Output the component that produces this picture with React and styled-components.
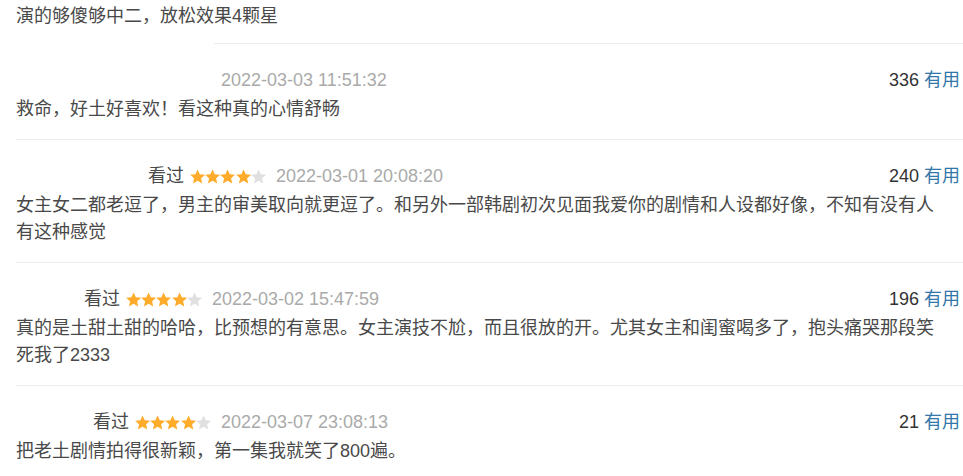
import React from "react";
import styled, { createGlobalStyle } from "styled-components";

const GlobalStyle = createGlobalStyle`
  html, body {
    margin: 0;
    padding: 0;
    background: #fff;
    overflow: hidden;
  }
  body {
    font-family: "Liberation Sans", "Noto Sans CJK SC", sans-serif;
    font-size: 18px;
    color: #494949;
  }
`;

const comments = [
  {
    id: 1,
    nameWidth: 205,
    watched: false,
    rating: 0,
    time: "2022-03-03 11:51:32",
    votes: 336,
    text: "救命，好土好喜欢！看这种真的心情舒畅",
    inset: 214,
  },
  {
    id: 2,
    nameWidth: 132,
    watched: true,
    rating: 4,
    time: "2022-03-01 20:08:20",
    votes: 240,
    text:
      "女主女二都老逗了，男主的审美取向就更逗了。和另外一部韩剧初次见面我爱你的剧情和人设都好像，不知有没有人有这种感觉",
    inset: 16,
  },
  {
    id: 3,
    nameWidth: 68,
    watched: true,
    rating: 4,
    time: "2022-03-02 15:47:59",
    votes: 196,
    text:
      "真的是土甜土甜的哈哈，比预想的有意思。女主演技不尬，而且很放的开。尤其女主和闺蜜喝多了，抱头痛哭那段笑死我了2333",
    inset: 16,
  },
  {
    id: 4,
    nameWidth: 77,
    watched: true,
    rating: 4,
    time: "2022-03-07 23:08:13",
    votes: 21,
    text: "把老土剧情拍得很新颖，第一集我就笑了800遍。",
    inset: 16,
  },
];

function Star({ on }) {
  return (
    <svg width="15" height="15" viewBox="1 1.2 22 21">
      <path
        d="M12 1.5l3.2 7 7.6.8-5.7 5.1 1.6 7.5L12 18l-6.7 3.9 1.6-7.5L1.2 9.3l7.6-.8z"
        fill={on ? "#ffac2d" : "#e0e0e0"}
      />
    </svg>
  );
}

function Comment({ c }) {
  return (
    <>
      <Divider $inset={c.inset} />
      <Item>
        <Info>
          <Left>
            <UserName $w={c.nameWidth} />
            {c.watched && <Watched>看过</Watched>}
            {c.rating > 0 && (
              <Stars>
                {[1, 2, 3, 4, 5].map((i) => (
                  <Star key={i} on={i <= c.rating} />
                ))}
              </Stars>
            )}
            <Time>{c.time}</Time>
          </Left>
          <Votes>
            <Count>{c.votes}</Count>
            <Useful>有用</Useful>
          </Votes>
        </Info>
        <Short>{c.text}</Short>
      </Item>
    </>
  );
}

export default function App() {
  return (
    <Page>
      <GlobalStyle />
      <Tail>
        <Short>演的够傻够中二，放松效果4颗星</Short>
      </Tail>
      {comments.map((c) => (
        <Comment key={c.id} c={c} />
      ))}
    </Page>
  );
}

const Page = styled.div`
  width: 963px;
  height: 476px;
  overflow: hidden;
  display: flex;
  flex-direction: column;
`;

const Tail = styled.div`
  padding: 3px 0 13px 16px;
`;

const Divider = styled.div`
  height: 1px;
  background: #ececec;
  margin-left: ${(p) => p.$inset}px;
  flex-shrink: 0;
`;

const Item = styled.div`
  padding: 22px 3px 16px 16px;
`;

const Info = styled.div`
  height: 28px;
  margin-bottom: 2px;
  display: flex;
  align-items: center;
  justify-content: space-between;
  line-height: 28px;
`;

const Left = styled.div`
  display: flex;
  align-items: center;
`;

const UserName = styled.span`
  display: inline-block;
  width: ${(p) => p.$w}px;
  height: 20px;
`;

const Watched = styled.span`
  color: #494949;
  margin-right: 6px;
`;

const Stars = styled.span`
  display: flex;
  align-items: center;
  margin-right: 10px;

  svg {
    display: block;
    width: 15.2px;
  }
`;

const Time = styled.span`
  color: #aaa;
`;

const Votes = styled.div`
  display: flex;
  align-items: center;
  gap: 5px;
`;

const Count = styled.span`
  color: #333;
`;

const Useful = styled.span`
  color: #3377aa;
`;

const Short = styled.p`
  margin: 0;
  line-height: 27px;
  color: #494949;
  padding-right: 14px;
`;
